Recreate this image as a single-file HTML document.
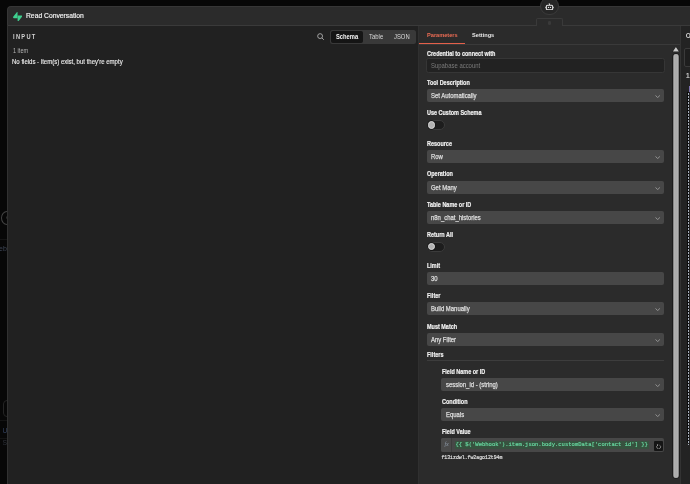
<!DOCTYPE html>
<html><head><meta charset="utf-8">
<style>
*{box-sizing:border-box;margin:0;padding:0}
html,body{-webkit-font-smoothing:antialiased;width:690px;height:484px;overflow:hidden;background:#070707;font-family:"Liberation Sans",sans-serif;position:relative}
.a{position:absolute}
.t{position:absolute;white-space:nowrap;line-height:1}
.lbl{position:absolute;white-space:nowrap;line-height:1;font-size:6.6px;font-weight:700;color:#f0f0f0;-webkit-text-stroke:0.2px #f0f0f0;transform:scaleX(0.83);transform-origin:0 0}
.sel{position:absolute;height:13px;background:#474747;border-radius:2px}
.sel span{position:absolute;left:4.5px;top:4.1px;font-size:6.6px;line-height:1;color:#dedede;-webkit-text-stroke:0.25px #dedede;white-space:nowrap;transform:scaleX(0.9);transform-origin:0 0}
.sel b{position:absolute;right:3.9px;top:5.3px;width:5.2px;height:2.8px}
.tog{position:absolute;width:18px;height:10.2px;border-radius:5.1px;background:#1d1d1d;border:1px solid #3b3b3b}
.tog i{position:absolute;left:-0.3px;top:0.4px;width:7.4px;height:7.4px;border-radius:50%;background:#b2b2b2;border:0.8px solid #dadada;box-shadow:0 0 0 0.7px #141414}
</style></head><body>
<div id="root" style="position:absolute;left:0;top:0;width:690px;height:484px;overflow:hidden;will-change:transform">

<!-- canvas remnants left -->
<div class="a" style="left:1.4px;top:210.9px;width:12.4px;height:14.6px;border:1.7px solid #444;border-radius:50%"></div>
<div class="a" style="left:5.5px;top:215.5px;width:3px;height:3px;border-radius:50%;background:#2e2e2e"></div>
<div class="a" style="left:0px;top:238.5px;width:7px;height:0.6px;background:#141414"></div>
<div class="t" style="left:-1px;top:245px;font-size:7px;color:#3e4656">eb</div>
<div class="a" style="left:3.4px;top:400px;width:12px;height:16.8px;border:0.8px solid #242424;border-radius:4px"></div>
<div class="a" style="left:0px;top:420.4px;width:7px;height:0.6px;background:#141414"></div><div class="a" style="left:0px;top:437.7px;width:7px;height:0.6px;background:#131313"></div>
<div class="t" style="left:2.6px;top:427.6px;font-size:6.8px;color:#34425e">U</div>
<div class="t" style="left:2.6px;top:440px;font-size:6.8px;color:#2e323a">S</div>

<!-- NDV container -->
<div class="a" style="left:7px;top:6px;width:700px;height:490px;background:#212121;border-top-left-radius:4px;overflow:hidden">
  <!-- header -->
  <div class="a" style="left:0;top:0;width:700px;height:19.5px;background:#2b2b2b;border-bottom:1px solid #3a3a3a;border-top:0.8px solid #363636;border-left:0.8px solid #363636;border-top-left-radius:4px"></div>
  <div class="a" style="left:0;top:19px;width:1px;height:480px;background:#313131"></div>
</div>

<!-- logo -->
<svg class="a" style="left:13px;top:11.6px" width="9.2" height="9.6" viewBox="0 0 109 113">
<path fill="#3ecf8e" d="M63.7076 110.284C60.8481 113.885 55.0502 111.912 54.9813 107.314L53.9738 40.0627L99.1935 40.0627C107.384 40.0627 111.952 49.5228 106.859 55.9374L63.7076 110.284Z"/>
<path fill="#3ecf8e" d="M45.317 2.07103C48.1765 -1.53037 53.9745 0.442937 54.0434 5.04075L54.4849 72.2922H9.83113C1.64038 72.2922 -2.92775 62.8321 2.1655 56.4175L45.317 2.07103Z"/>
</svg>
<div class="t" style="left:26px;top:12px;font-size:7.3px;color:#f2f2f2;-webkit-text-stroke:0.18px #f2f2f2;transform:scaleX(0.925);transform-origin:0 0">Read Conversation</div>

<!-- robot circle -->
<div class="a" style="left:540.1px;top:-3.5px;width:18.8px;height:18.8px;border-radius:50%;background:#262626;border:1.1px solid #3a3a3a"></div>
<svg class="a" style="left:545.2px;top:2.6px" width="9" height="7.5" viewBox="0 0 18 15">
<rect x="2.6" y="4.4" width="12.8" height="9" rx="2.6" fill="none" stroke="#e6e6e6" stroke-width="2.2"/>
<circle cx="7" cy="8.9" r="1.3" fill="#e6e6e6"/><circle cx="11" cy="8.9" r="1.3" fill="#e6e6e6"/>
<path d="M8.4 0.6 L9.3 4" stroke="#e6e6e6" stroke-width="1.8"/>
<rect x="0.8" y="7.9" width="1.2" height="2" fill="#e6e6e6"/><rect x="16" y="7.9" width="1.2" height="2" fill="#e6e6e6"/>
</svg>
<!-- tab under robot -->
<div class="a" style="left:536.3px;top:18px;width:26.4px;height:8px;background:#2b2b2b;border:1px solid #3a3a3a;border-bottom:none;border-radius:2px 2px 0 0"></div>
<div class="a" style="left:547.7px;top:21.1px;width:3.6px;height:4.1px;border-radius:1.2px;background:#3a3a3a"></div>

<!-- INPUT panel -->
<div class="t" style="left:12.6px;top:33.9px;font-size:6.7px;font-weight:700;letter-spacing:1.55px;color:#d2d2d2;transform:scaleX(0.85);transform-origin:0 0">INPUT</div>
<div class="t" style="left:13px;top:48.1px;font-size:6.3px;color:#b4b4b4;transform:scaleX(0.88);transform-origin:0 0">1 item</div>
<div class="t" style="left:11.5px;top:58.7px;font-size:6.3px;color:#ececec;-webkit-text-stroke:0.12px #ececec;transform:scaleX(0.957);transform-origin:0 0">No fields - item(s) exist, but they're empty</div>

<!-- search icon -->
<svg class="a" style="left:316.5px;top:33px" width="7.4" height="7.4" viewBox="0 0 10 10">
<circle cx="4.2" cy="4.2" r="3.3" fill="none" stroke="#bdbdbd" stroke-width="1.1"/>
<path d="M6.7 6.7 L9.3 9.3" stroke="#bdbdbd" stroke-width="1.1"/>
</svg>
<!-- tabs -->
<div class="a" style="left:330px;top:30px;width:85.5px;height:13.8px;background:#393939;border-radius:2.5px"></div>
<div class="a" style="left:331.3px;top:31.3px;width:31.7px;height:11.3px;background:#151515;border-radius:2px"></div>
<div class="t" style="left:335.8px;top:33.5px;font-size:6.4px;font-weight:700;color:#f5f5f5;transform:scaleX(0.905);transform-origin:0 0">Schema</div>
<div class="t" style="left:368.8px;top:33.5px;font-size:6.4px;color:#d8d8d8;transform:scaleX(0.93);transform-origin:0 0">Table</div>
<div class="t" style="left:393.8px;top:33.5px;font-size:6.4px;color:#d8d8d8;transform:scaleX(0.92);transform-origin:0 0">JSON</div>

<!-- divider between panels -->
<div class="a" style="left:418px;top:25.5px;width:1.4px;height:460px;background:#303030"></div>

<!-- PARAMS panel -->
<div class="a" style="left:419.4px;top:25.5px;width:261px;height:460px;background:#2b2b2b"></div>
<div class="a" style="left:419.4px;top:43.6px;width:261.4px;height:1px;background:#3a3a3a"></div>
<div class="a" style="left:419px;top:43px;width:46px;height:1.3px;background:#e4604a"></div>
<div class="t" style="left:426.8px;top:31.9px;font-size:6.2px;font-weight:700;color:#ec6c54;transform:scaleX(0.91);transform-origin:0 0">Parameters</div>
<div class="t" style="left:472.1px;top:31.9px;font-size:6.2px;font-weight:700;color:#e8e8e8;transform:scaleX(0.91);transform-origin:0 0">Settings</div>

<!-- right output strip -->
<div class="a" style="left:679.7px;top:25.5px;width:1.4px;height:460px;background:#333333"></div>
<div class="a" style="left:681.1px;top:25.5px;width:10px;height:460px;background:#232323"></div>
<div class="t" style="left:685.8px;top:32.6px;font-size:6.5px;font-weight:700;color:#cfcfcf">O</div>
<div class="a" style="left:684.4px;top:47.6px;width:10px;height:19px;border:0.8px solid #3a3a3a;border-radius:2px;background:#1e1e1e"></div>
<div class="t" style="left:685.9px;top:72.9px;font-size:6.6px;color:#d4d4d4;-webkit-text-stroke:0.2px #d4d4d4">1</div>
<div class="a" style="left:688.6px;top:85.6px;width:3px;height:6.2px;background:#7b70ae"></div>
<div class="a" style="left:687.3px;top:92px;width:2.2px;height:351px;background:#0d0d0d"></div><div class="a" style="left:687.8px;top:92.5px;width:1.5px;height:352px;background:repeating-linear-gradient(180deg,#aab2be 0 1.8px,transparent 1.8px 3px)"></div>


<!-- scrollbar -->
<svg class="a" style="left:671.8px;top:45.8px" width="7.8" height="6.4" viewBox="0 0 7.8 6.4"><path d="M3.9 1 L6.9 5.6 L0.9 5.6Z" fill="#c8c8c8" stroke="#151515" stroke-width="0.8" stroke-linejoin="round" paint-order="stroke"/></svg>
<div class="a" style="left:672.8px;top:54.3px;width:6px;height:424px;border-radius:3px;box-shadow:0 0 0 0.8px #1a1a1a;background:linear-gradient(90deg,#707070 0%,#b8b8b8 28%,#a4a4a4 50%,#b8b8b8 72%,#707070 100%)"></div>

<!-- fields -->
<div class="lbl" style="left:426.8px;top:51.25px">Credential to connect with</div>
<div class="a" style="left:426.4px;top:57.6px;width:238.4px;height:15px;background:#222222;border:1.1px solid #363636;border-radius:2.5px"></div>
<div class="t" style="left:430.7px;top:62.9px;font-size:6.6px;color:#7a7a7a;transform:scaleX(0.9);transform-origin:0 0">Supabase account</div>

<div class="lbl" style="left:426.8px;top:80.15px">Tool Description</div>
<div class="sel" style="left:426.9px;top:89.1px;width:237px"><span>Set Automatically</span><svg class="a" style="right:3.9px;top:6.1px" width="5.4" height="3" viewBox="0 0 6 3.4"><path d="M0.5 0.5 L3 2.9 L5.5 0.5" fill="none" stroke="#a8a8a8" stroke-width="0.9"/></svg></div>

<div class="lbl" style="left:426.8px;top:110.35px">Use Custom Schema</div>
<div class="tog" style="left:427.3px;top:119.8px"><i></i></div>

<div class="lbl" style="left:426.8px;top:141.25px">Resource</div>
<div class="sel" style="left:426.9px;top:150px;width:237px"><span>Row</span><svg class="a" style="right:3.9px;top:6.1px" width="5.4" height="3" viewBox="0 0 6 3.4"><path d="M0.5 0.5 L3 2.9 L5.5 0.5" fill="none" stroke="#a8a8a8" stroke-width="0.9"/></svg></div>

<div class="lbl" style="left:426.8px;top:171.45px">Operation</div>
<div class="sel" style="left:426.9px;top:180.7px;width:237px"><span>Get Many</span><svg class="a" style="right:3.9px;top:6.1px" width="5.4" height="3" viewBox="0 0 6 3.4"><path d="M0.5 0.5 L3 2.9 L5.5 0.5" fill="none" stroke="#a8a8a8" stroke-width="0.9"/></svg></div>

<div class="lbl" style="left:426.8px;top:202.05px">Table Name or ID</div>
<div class="sel" style="left:426.9px;top:211.2px;width:237px"><span>n8n_chat_histories</span><svg class="a" style="right:3.9px;top:6.1px" width="5.4" height="3" viewBox="0 0 6 3.4"><path d="M0.5 0.5 L3 2.9 L5.5 0.5" fill="none" stroke="#a8a8a8" stroke-width="0.9"/></svg></div>

<div class="lbl" style="left:426.8px;top:232.35px">Return All</div>
<div class="tog" style="left:427.3px;top:241.6px"><i></i></div>

<div class="lbl" style="left:426.8px;top:262.75px">Limit</div>
<div class="sel" style="left:426.9px;top:271.7px;width:237px"><span>30</span></div>

<div class="lbl" style="left:426.8px;top:293.05px">Filter</div>
<div class="sel" style="left:426.9px;top:302.3px;width:237px"><span>Build Manually</span><svg class="a" style="right:3.9px;top:6.1px" width="5.4" height="3" viewBox="0 0 6 3.4"><path d="M0.5 0.5 L3 2.9 L5.5 0.5" fill="none" stroke="#a8a8a8" stroke-width="0.9"/></svg></div>

<div class="lbl" style="left:426.8px;top:324.15px">Must Match</div>
<div class="sel" style="left:426.9px;top:332.9px;width:237px"><span>Any Filter</span><svg class="a" style="right:3.9px;top:6.1px" width="5.4" height="3" viewBox="0 0 6 3.4"><path d="M0.5 0.5 L3 2.9 L5.5 0.5" fill="none" stroke="#a8a8a8" stroke-width="0.9"/></svg></div>

<div class="lbl" style="left:426.8px;top:352.35px">Filters</div>
<div class="a" style="left:426.7px;top:360.3px;width:237px;height:0.8px;background:#3d3d3d"></div>

<div class="lbl" style="left:441.8px;top:368.95px">Field Name or ID</div>
<div class="sel" style="left:441.2px;top:377.7px;width:222.8px"><span>session_id - (string)</span><svg class="a" style="right:3.9px;top:6.1px" width="5.4" height="3" viewBox="0 0 6 3.4"><path d="M0.5 0.5 L3 2.9 L5.5 0.5" fill="none" stroke="#a8a8a8" stroke-width="0.9"/></svg></div>

<div class="lbl" style="left:441.8px;top:399.35px">Condition</div>
<div class="sel" style="left:441.2px;top:407.7px;width:222.8px"><span>Equals</span><svg class="a" style="right:3.9px;top:6.1px" width="5.4" height="3" viewBox="0 0 6 3.4"><path d="M0.5 0.5 L3 2.9 L5.5 0.5" fill="none" stroke="#a8a8a8" stroke-width="0.9"/></svg></div>

<div class="lbl" style="left:441.8px;top:429.15px">Field Value</div>
<div class="a" style="left:441.1px;top:438px;width:223px;height:13.7px;background:#474747;border-radius:2px"></div>
<div class="a" style="left:441.1px;top:438px;width:11px;height:13.7px;background:#4a4a4a;border-radius:2px 0 0 2px;border-right:0.8px solid #3c3c3c"></div>
<div class="t" style="left:444.4px;top:441px;font-family:'Liberation Serif',serif;font-style:italic;font-size:6.2px;color:#8a96a4">fx</div>
<div class="a" style="left:454.8px;top:441.1px;width:194px;height:7.6px;background:#37523f"></div>
<div class="t" style="left:455.4px;top:442px;font-family:'Liberation Mono',monospace;font-size:5.54px;color:#68dba2;-webkit-text-stroke:0.15px #68dba2">{{ $('Webhook').item.json.body.customData['contact id'] }}</div>
<div class="a" style="left:653.5px;top:441.3px;width:9.8px;height:10px;background:#151515;border-radius:1px"></div>
<svg class="a" style="left:656.2px;top:443.6px" width="5.4" height="5.6" viewBox="0 0 10 10.4">
<path d="M3.2 2.4 A3.6 3.6 0 1 0 6.4 2.2" fill="none" stroke="#c4c4c4" stroke-width="1.1"/>
<path d="M1.6 0.6 L4.4 1.4 L2.4 3.8Z" fill="#c4c4c4"/>
</svg>
<div class="t" style="left:441.4px;top:455.8px;font-family:'Liberation Mono',monospace;font-size:4.85px;color:#e6e6e6;-webkit-text-stroke:0.15px #e6e6e6">f13izdwl.fw2ago12t94m</div>

</div>
</body></html>
